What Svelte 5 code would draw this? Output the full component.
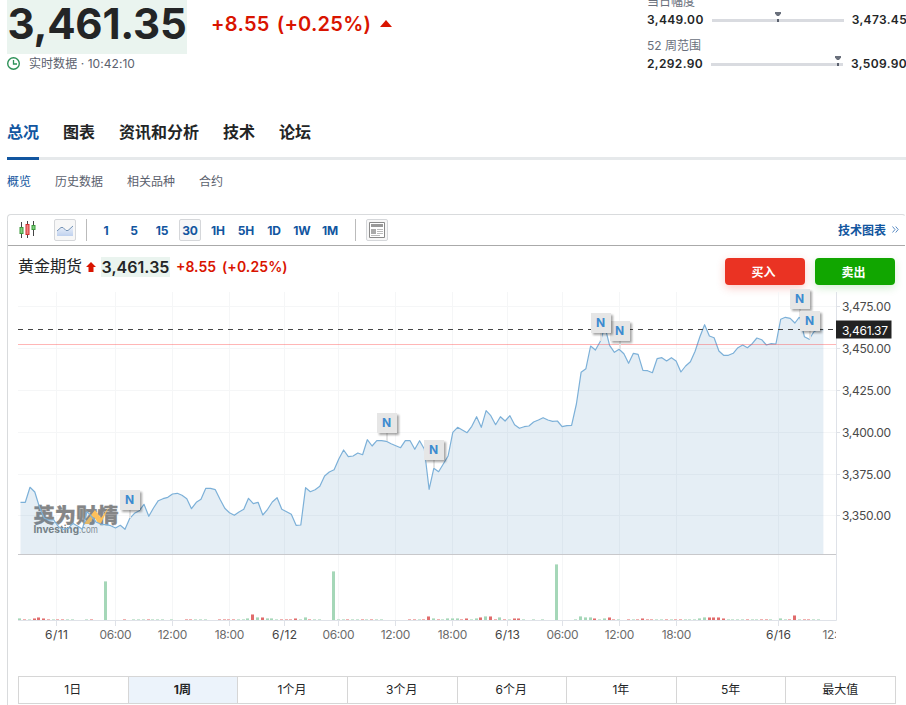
<script>
  let activeTab = $state('总况');
  let activeSub = $state('概览');
  let interval = $state('30');
  let range = $state('1周');

  const TABS = ['总况', '图表', '资讯和分析', '技术', '论坛'];
  const SUBS = ['概览', '历史数据', '相关品种', '合约'];
  const INTERVALS = ['1', '5', '15', '30', '1H', '5H', '1D', '1W', '1M'];
  const RANGES = ['1日', '1周', '1个月', '3个月', '6个月', '1年', '5年', '最大值'];

  const SPREADS = [
    { label: '当日幅度', low: '3,449.00', high: '3,473.45', pos: 50 },
    { label: '52 周范围', low: '2,292.90', high: '3,509.90', pos: 96.2 },
  ];

  const PRICE_TICKS = [
    [306.5, '3,475.00'], [348.5, '3,450.00'], [390.5, '3,425.00'],
    [432.5, '3,400.00'], [474.5, '3,375.00'], [515.5, '3,350.00'],
  ];

  const TIME_TICKS = [
    [56.5, '6/11'], [115.5, '06:00'], [172.5, '12:00'], [229.5, '18:00'],
    [284.5, '6/12'], [338.5, '06:00'], [395.5, '12:00'], [452.5, '18:00'],
    [507.5, '6/13'], [562.5, '06:00'], [619.5, '12:00'], [676.5, '18:00'],
    [778.5, '6/16'],
  ];

  // one value per 30 minute candle
  const closes = [
    502.3, 502.3, 487.3, 492, 507.3, 518.3, 520, 520, 526.7, 529.3,
    528.3, 523.3, 526, 529.3, 511.7, 516.7, 522.3, 524.3, 524.7, 525.7,
    528, 525.3, 529.3, 518.3, 513.3, 510.7, 504.3, 516.3, 508, 500.7,
    498.7, 497.3, 494, 493.3, 495.3, 498.7, 508.7, 502.3, 499.3, 488.3,
    488.3, 489.7, 499.3, 508.3, 512.7, 515.3, 512, 509.3, 498.3, 503.7,
    502.3, 515, 509.3, 502, 497.7, 509.3, 511.7, 514.3, 525.3, 525,
    487.7, 491.7, 489.7, 486.3, 476, 472, 469.7, 459, 450, 456.7,
    456, 453, 454.7, 439.7, 446, 440.7, 440.7, 441.3, 443.7, 445.7,
    447.7, 440.7, 440.7, 449.3, 440.7, 449, 489.3, 468.3, 471.7, 464,
    456, 432.3, 427.3, 430, 432.7, 426.3, 416.7, 427.3, 410.7, 415.7,
    424.7, 416.7, 421, 415.7, 424.7, 428.3, 426.7, 426, 422, 420,
    417.7, 420, 421.3, 421, 426.7, 425.7, 425.3, 404, 372.3, 368.7,
    346, 350, 341.7, 326.7, 345.3, 352.3, 349.3, 353.7, 363.3, 353.3,
    354.3, 370.3, 370.7, 372.7, 358.7, 357.7, 361, 357.7, 361, 372,
    366, 361.7, 351.3, 336.7, 324.7, 336, 337.7, 351, 355.3, 355.3,
    353.3, 347.7, 345, 347.7, 343.7, 338, 339.7, 345, 343.7, 344,
    319.3, 317.3, 318.3, 323, 316.7, 336.7, 339.3, 331.7, 329.3, 329.7,
  ];

  const linePath = closes.map((y, i) => `${i ? 'L' : 'M'}${(20.5 + i * 4.751).toFixed(1)} ${y}`).join('');
  const areaPath = linePath + 'V554H20.5Z';

  // [x, height], negative height is a down bar
  const volumes = [
    [18, 2], [23, -1], [28, 1], [33, -2], [37, -3], [42, -2], [47, -1], [52, 1], [56, -1], [61, -1], [66, 1], [71, 1],
    [85, 1], [90, -1], [104, 39], [123, -1], [132, 1], [137, 1], [142, 1], [147, -1], [151, 1], [156, 1], [161, 1],
    [170, 1], [185, -1], [189, -1], [194, 1], [199, 1], [204, 1], [218, -1], [223, -1], [227, -1], [232, -1], [237, 1],
    [242, 1], [246, 2], [251, -6], [256, 3], [261, -3], [266, 2], [270, 2], [275, 1], [280, -1], [285, -1], [289, -1],
    [294, -2], [299, 1], [304, 3], [308, -1], [313, 1], [318, 1], [332, 49], [337, 1], [342, 1], [346, -1], [351, 1],
    [356, 1], [361, -1], [365, 1], [370, -1], [375, 1], [380, 1], [408, -1], [413, -1], [418, 1], [422, -1], [427, -4],
    [432, 2], [437, -1], [441, 1], [446, 2], [451, 2], [456, 2], [460, -1], [465, -2], [470, 1], [475, 2], [479, -3],
    [484, 4], [489, -4], [494, -1], [498, 3], [503, -1], [508, 1], [513, -2], [517, -2], [522, 1], [532, 1], [541, 1],
    [555, 56], [574, 1], [579, 4], [584, 3], [589, 3], [593, -2], [598, 1], [603, 2], [608, -3], [612, -1], [617, 1],
    [627, -1], [632, 1], [636, -1], [641, -2], [646, -1], [650, -1], [655, 1], [660, 1], [665, -1], [670, 1],
    [674, -1], [679, -1], [684, 1], [688, 1], [693, 1], [698, 2], [703, 3], [708, -3], [712, -3], [717, -3], [722, -2],
    [727, 1], [731, 1], [736, 1], [741, 1], [746, -1], [751, 1], [755, 1], [760, -1], [765, -1], [769, 1],
    [779, 2], [784, 1], [788, -1], [793, -5], [798, 1], [803, -1], [807, -1], [812, 1], [817, 1],
  ];

  const NEWS = [
    { x: 120, y: 490, stem: 8 },
    { x: 377, y: 413, stem: 8 },
    { x: 424, y: 440, stem: 8 },
    { x: 610, y: 321, stem: 8 },
    { x: 591, y: 313, stem: 8 },
    { x: 790, y: 289, stem: 8 },
    { x: 800, y: 311, stem: 8 },
  ];
</script>

<div class="page">
  <header class="quote">
    <div class="summary">
      <div class="price-line">
        <span class="last">3,461.35</span>
        <span class="change">+8.55</span>
        <span class="change pct">(+0.25%)</span>
        <svg class="up" width="12" height="7" viewBox="0 0 12 7"><path d="M0 7 6 0l6 7z" fill="#d91400" /></svg>
      </div>
      <div class="stamp">
        <svg width="14" height="14" viewBox="0 0 14 14" fill="none" stroke="#2d9158">
          <circle cx="6.5" cy="6.5" r="5.8" stroke-width="1.4" />
          <path d="M6.500 3V7H10" stroke-width="1.3" />
        </svg>
        <span>实时数据 · 10:42:10</span>
      </div>
    </div>
    <div class="spreads">
      {#each SPREADS as s}
        <div class="spread">
          <div class="spread-label">{s.label}</div>
          <div class="spread-row">
            <b>{s.low}</b>
            <div class="track">
              <svg class="pin" style="left: {s.pos}%" width="6" height="10" viewBox="0 0 6 10">
                <path d="M0 0h6v1.500L4 4H2L0 1.500z" fill="#6a707c" />
                <path d="M2 7h2v3H2z" fill="#5b616e" />
              </svg>
            </div>
            <b>{s.high}</b>
          </div>
        </div>
      {/each}
    </div>
  </header>

  <nav class="tabs">
    {#each TABS as tab}
      <button class="tab" class:active={activeTab === tab} onclick={() => activeTab = tab}>{tab}</button>
    {/each}
  </nav>

  <nav class="subs">
    {#each SUBS as sub}
      <button class="sub" class:active={activeSub === sub} onclick={() => activeSub = sub}>{sub}</button>
    {/each}
  </nav>

  <section class="panel">
    <div class="toolbar">
      <svg class="candles" width="18" height="18" viewBox="0 0 18 18">
        <path d="M2.500 1v16M8.500 0v17M14.500 0v15" stroke="#444" />
        <rect x="1" y="6.5" width="3" height="6" fill="#7fd07f" stroke="#3c9a3c" />
        <rect x="7" y="3.5" width="3" height="10" fill="#f28080" stroke="#cf3030" />
        <rect x="13" y="4.5" width="3" height="4" fill="#7fd07f" stroke="#3c9a3c" />
      </svg>
      <button class="tool" aria-label="area">
        <svg width="18" height="14" viewBox="0 0 18 14">
          <defs>
            <linearGradient id="mini" x1="0" y1="0" x2="0" y2="1">
              <stop offset="0" stop-color="#eef3fb" /><stop offset="1" stop-color="#bfd1ee" />
            </linearGradient>
          </defs>
          <path d="M1 8 5 4.500h2l3 3h2L17 3v10H1z" fill="url(#mini)" />
          <path d="M1 8 5 4.500h2l3 3h2L17 3" fill="none" stroke="#7593b5" />
        </svg>
      </button>
      <i class="sep first"></i>
      <div class="intervals">
        {#each INTERVALS as it}
          <button class="interval" class:active={interval === it} onclick={() => interval = it}>{it}</button>
        {/each}
      </div>
      <i class="sep second"></i>
      <button class="tool" aria-label="news">
        <svg width="18" height="18" viewBox="0 0 18 18">
          <path d="M1.500 1.500h15v15h-15z" fill="#fff" stroke="#8a8a8a" />
          <path d="M3 3h12v3H3z" fill="#999" />
          <path d="M3 8h5v5H3z" fill="#aaa" />
          <path d="M9 8.500h6M9 10.500h6M9 12.500h6M3 14.500h9" stroke="#bbb" />
        </svg>
      </button>
      <div class="spacer"></div>
      <a class="tech" href="#chart">技术图表
        <svg width="7" height="7" viewBox="0 0 7 7" fill="none" stroke="#5b8cc4"><path d="M.5.5l2.500 3-2.500 3M3.700.5l2.500 3-2.500 3" /></svg>
      </a>
    </div>

    <div class="heading">
      <span class="name">黄金期货</span>
      <svg class="arrow" width="10" height="10" viewBox="0 0 10 10"><path d="M5 0l5 5H7.500v5h-5V5H0z" fill="#d91400" /></svg>
      <span class="h-last">3,461.35</span>
      <span class="h-change">+8.55</span>
      <span class="h-change pc">(+0.25%)</span>
      <div class="spacer"></div>
      <button class="trade buy">买入</button>
      <button class="trade sell">卖出</button>
    </div>

    <svg class="chart" width="888" height="360" viewBox="18 286 888 360">
      <defs>
        <clipPath id="plot"><path d="M18 286h818v360H18z" /></clipPath>
        <filter id="shade" x="-30%" y="-30%" width="180%" height="180%">
          <feDropShadow dx="2" dy="2" stdDeviation="1.2" flood-color="#000" flood-opacity=".35" />
        </filter>
      </defs>

      <g class="grid">
        {#each PRICE_TICKS as [y]}
          <path d="M18 {y}H836" />
        {/each}
        {#each TIME_TICKS as [x]}
          <path d="M{x} 292V620" />
        {/each}
      </g>

      <g class="watermark">
        <text class="wm-cn" x="33.5" y="522.5" textLength="85" lengthAdjust="spacingAndGlyphs">英为财情</text>
        <path d="M84 524l11-14 6 8 8-11-8 16h-3l-4-6-5 7z" fill="#fdc05a" />
        <text class="wm-en" x="33.5" y="533" textLength="45.5" lengthAdjust="spacingAndGlyphs">Investing</text>
        <text class="wm-com" x="79" y="533" textLength="19" lengthAdjust="spacingAndGlyphs">.com</text>
      </g>

      <path d={areaPath} fill="#4a8abb" fill-opacity=".14" />
      <path d={linePath} fill="none" stroke="#7cb0d8" stroke-width="1.2" stroke-linejoin="round" />

      <path d="M18 344.500H836" stroke="#ff4040" stroke-opacity=".38" />
      <path d="M18 329.500H836" stroke="#444" stroke-dasharray="5 5" />

      <g shape-rendering="crispEdges">
        {#each volumes as [x, h]}
          {@const up = h > 0}
          {@const n = Math.abs(h)}
          <rect {x} y={620 - n} width="3" height="1" fill={up ? '#c9e6d4' : '#f0b0b0'} />
          {#if n > 1}
            <rect {x} y={621 - n} width="3" height={n - 1} fill={up ? '#a5d7b8' : '#e06c6c'} />
          {/if}
        {/each}
      </g>

      <path d="M18 554.500H836" stroke="#c8c8cb" />
      <path d="M18 620.500H836.500V292" fill="none" stroke="#dfe2e8" />
      {#each PRICE_TICKS as [y, label]}
        <path d="M836 {y}h4" stroke="#dfe2e8" />
        <text class="tick price" x="842" y={y + 4.5} textLength="49">{label}</text>
      {/each}
      {#each TIME_TICKS as [x, label]}
        {@const w = label.includes('/') ? (label === '6/11' ? 23 : 25) : label[0] === '1' ? 29.5 : 32}
        <path d="M{x} 621v5" stroke="#dfe2e8" />
        <text class="tick time" class:day={label.includes('/')} x={x - w / 2} y="639" textLength={w}>{label}</text>
      {/each}
      <g clip-path="url(#plot)"><text class="tick time" x="822.5" y="639" textLength="29.5">12:00</text></g>

      <path d="M836 320.500h55.500v18H836z" fill="#222" />
      <text class="tick now" x="842" y="334.5" textLength="46">3,461.37</text>

      {#each NEWS as n}
        <path d="M{n.x + 10} {n.y + 20}v{n.stem}" stroke="#e4e4e4" stroke-width="2" />
        <rect x={n.x} y={n.y} width="20" height="20" fill="#e6e6e6" filter="url(#shade)" />
        <text class="news" x={n.x + 9.5} y={n.y + 14} text-anchor="middle">N</text>
      {/each}
    </svg>

    <div class="ranges">
      {#each RANGES as r}
        <button class="range" class:active={range === r} onclick={() => range = r}>{r}</button>
      {/each}
    </div>
  </section>
</div>

<style>
  :global(body) { background: #fff; overflow: hidden; }

  .page {
    width: 906px;
    height: 705px;
    overflow: hidden;
    box-sizing: border-box;
    padding-left: 7px;
    font-family: Inter, "Noto Sans CJK SC", sans-serif;
    color: #232526;
  }
  button {
    padding: 0;
    border: 0;
    background: none;
    font: inherit;
    color: inherit;
    cursor: pointer;
  }
  .spacer { flex: 1; }

  .quote {
    display: flex;
    height: 108px;
    justify-content: space-between;
  }
  .price-line { display: flex; height: 54px; }
  .last {
    width: 180px;
    height: 54px;
    background: #eaf4ef;
    font-size: 42px;
    font-weight: 700;
    line-height: 48px;
    letter-spacing: -.25px;
    text-align: center;
    white-space: nowrap;
  }
  .change {
    margin-left: 24px;
    font-size: 20px;
    font-weight: 600;
    line-height: 48px;
    color: #d91400;
    white-space: nowrap;
    letter-spacing: .3px;
  }
  .change.pct { margin-left: 7px; letter-spacing: .25px; }
  .up { margin: 20px 0 0 9px; }
  .stamp {
    display: flex;
    align-items: center;
    gap: 8px;
    height: 19px;
    font-size: 12px;
    line-height: 17px;
    color: #5b616e;
  }
  .stamp span { letter-spacing: .06px; }

  .spreads { width: 259px; margin-top: -7px; }
  .spread { height: 44px; }
  .spread-label {
    height: 18px;
    font-size: 12px;
    line-height: 18px;
    color: #6a707c;
  }
  .spread-row {
    display: flex;
    align-items: center;
    gap: 8px;
    height: 18px;
    font-size: 12px;
    line-height: 18px;
    white-space: nowrap;
  }
  .spread-row b { font-weight: 600; letter-spacing: .35px; }
  .track {
    position: relative;
    width: 132px;
    height: 3px;
    flex-shrink: 0;
    margin-top: 1px;
    background: #d9dbe0;
  }
  .pin { position: absolute; top: -7px; margin-left: -3px; }

  .tabs {
    display: flex;
    gap: 24px;
    height: 49px;
    border-bottom: 3px solid #e6e9eb;
  }
  .tab {
    height: 52px;
    box-sizing: border-box;
    padding-bottom: 4px;
    font-size: 16px;
    font-weight: 600;
    border-bottom: 3px solid transparent;
  }
  .tab.active { color: #1256a0; border-bottom-color: #1256a0; }

  .subs { display: flex; gap: 24px; height: 41px; margin-bottom: 13px; }
  .sub { font-size: 12px; color: #5b616e; }
  .sub.active { color: #1256a0; }

  .panel {
    height: 520px;
    border: 1px solid #d9dbdd;
    border-right-color: transparent;
    border-radius: 4px;
  }
  .toolbar {
    display: flex;
    align-items: center;
    height: 30px;
    padding: 0 6px 0 11px;
    border-bottom: 1px solid #aaa;
  }
  .candles { margin-right: 17px; }
  .tool {
    display: flex;
    align-items: center;
    justify-content: center;
    width: 22px;
    height: 22px;
    box-sizing: border-box;
    background: #f7f7f7;
    border: 1px solid #d5d7da;
    border-radius: 2px;
  }
  .sep { width: 1px; height: 22px; background: #bbb; }
  .sep.first { margin: 0 8px 0 10px; }
  .sep.second { margin: 0 10px 0 14px; }
  .intervals { display: flex; gap: 6px; }
  .interval {
    width: 22px;
    height: 22px;
    box-sizing: border-box;
    font-size: 12px;
    font-weight: 700;
    letter-spacing: -.1px;
    color: #1256a0;
    border: 1px solid transparent;
    border-radius: 2px;
    display: flex;
    align-items: center;
    justify-content: center;
  }
  .interval.active { background: #f7f7f7; border-color: #d5d7da; }
  .tech {
    display: flex;
    align-items: center;
    gap: 6px;
    margin-top: -1px;
    font-size: 12px;
    font-weight: 700;
    color: #1256a0;
    text-decoration: none;
  }

  .heading {
    display: flex;
    align-items: center;
    height: 40px;
    padding: 1px 10px 0 10px;
    box-sizing: border-box;
  }
  .name { margin-top: -3px; font-size: 16px; }
  .arrow { margin: 0 5px 0 4px; }
  .h-last {
    width: 69px;
    height: 20px;
    background: #eaf4ef;
    font-size: 16px;
    font-weight: 600;
    line-height: 21px;
    letter-spacing: .05px;
    text-align: center;
    white-space: nowrap;
  }
  .h-change { margin-left: 6px; font-size: 14px; font-weight: 600; color: #d91400; }
  .h-change.pc { letter-spacing: .1px; }
  .trade {
    width: 80px;
    height: 27px;
    margin-top: 10px;
    padding-bottom: 1px;
    border-radius: 4px;
    color: #fff;
    font-size: 12px;
    font-weight: 700;
  }
  .trade.buy { padding-right: 3px; background: #ea3323; box-shadow: 0 3px 8px rgba(234, 51, 35, .25); margin-right: 10px; }
  .trade.sell { padding-right: 3px; background: #11a600; box-shadow: 0 3px 8px rgba(17, 166, 0, .18); }

  .chart { display: block; margin-left: 10px; }
  .grid path { stroke: #f5f6f7; }
  .tick { font-size: 12px; fill: #4a4a4a; }
  .tick.time { fill: #6b6b6b; }
  .tick.day { fill: #444; }
  .tick.now { fill: #fff; }
  .news { font-size: 12px; font-weight: 700; fill: #3d8bd0; }
  .wm-cn { font-size: 20px; font-weight: 900; fill: #858687; stroke: #858687; stroke-width: .3; }
  .wm-en { font-size: 10px; font-weight: 700; fill: #7d7f80; }
  .wm-com { font-size: 10px; fill: #8d8f90; }

  .ranges {
    display: grid;
    grid-template-columns: repeat(8, 1fr);
    width: 878px;
    height: 28px;
    box-sizing: border-box;
    margin: 30px 0 0 10px;
    border: 1px solid #d6d6d6;
    border-left: 0;
  }
  .range { padding: 0 1px 3px 0; font-size: 12px; border-left: 1px solid #d6d6d6; }
  .range.active { background: #ecf3fb; font-weight: 700; }
</style>
